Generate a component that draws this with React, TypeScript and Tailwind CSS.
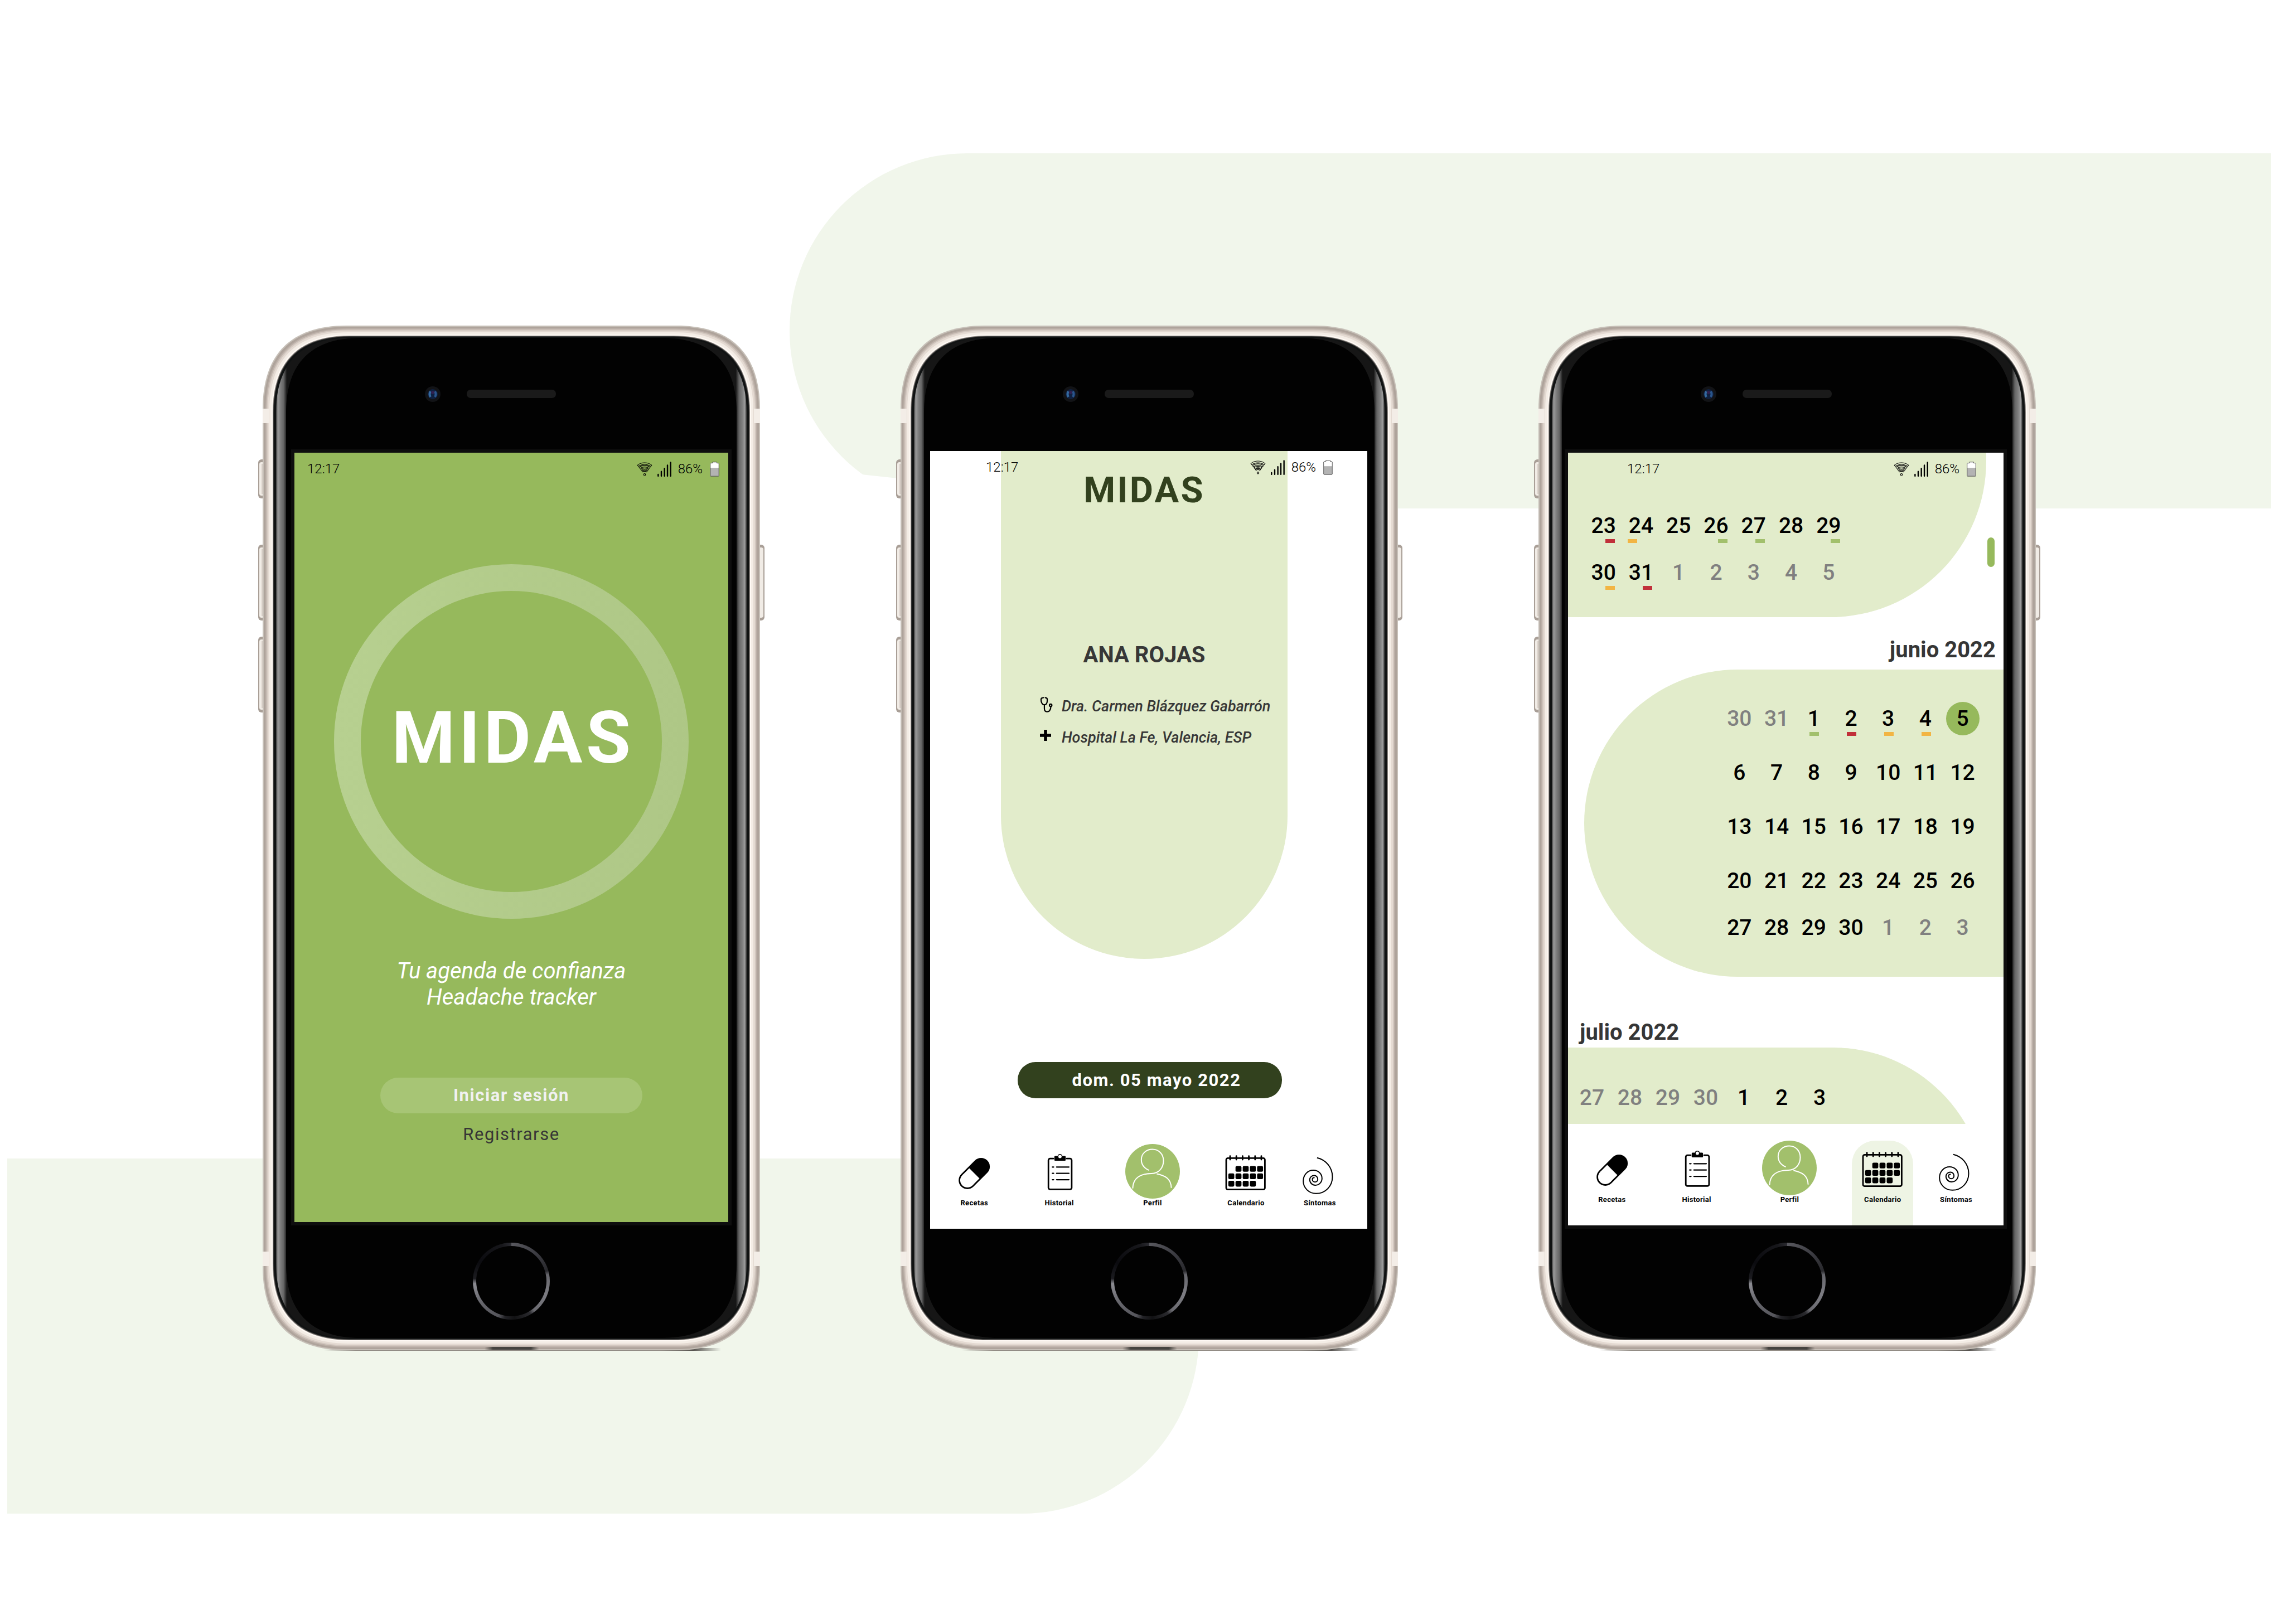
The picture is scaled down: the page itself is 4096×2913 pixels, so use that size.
import type { ReactNode } from 'react';

/* ---------- Phone hardware ---------- */

const BODY_W = 892;
const BODY_H = 1838;

// Rounded outline with continuous corners, inset from the body edge.
function outline(ix: number, iy: number, corner: number): string {
  const l = ix;
  const t = iy;
  const r = BODY_W - ix;
  const b = BODY_H - iy;
  const e = corner;
  const h = corner * 0.34;
  return [
    `M${l} ${t + e}`,
    `C${l} ${t + h} ${l + h} ${t} ${l + e} ${t}`,
    `H${r - e}`,
    `C${r - h} ${t} ${r} ${t + h} ${r} ${t + e}`,
    `V${b - e}`,
    `C${r} ${b - h} ${r - h} ${b} ${r - e} ${b}`,
    `H${l + e}`,
    `C${l + h} ${b} ${l} ${b - h} ${l} ${b - e}`,
    'Z',
  ].join('');
}

const frameLayers: [number, string][] = [
  [0, '#c6bfb7'],
  [2, '#aea39b'],
  [5, '#bcb0a8'],
  [7, '#d2c7bf'],
  [9, '#e4dad2'],
  [12, '#f4ede6'],
  [16, '#fffaf5'],
  [18, '#8f8883'],
  [19, '#3a3a3a'],
  [20, '#101212'],
];

function SideButton({ x, y, h }: { x: number; y: number; h: number }) {
  return (
    <g>
      <rect x={x} y={y} width="22" height={h} rx="6" fill="#a99f97" />
      <rect x={x + 2} y={y + 5} width="18" height={h - 10} rx="4" fill="#f1ece6" />
      <rect x={x + 6} y={y + 8} width="3" height={h - 16} fill="#d8cfc8" />
    </g>
  );
}

function Shell({ id }: { id: string }) {
  return (
    <svg
      aria-hidden="true"
      viewBox={`0 0 ${BODY_W} ${BODY_H}`}
      className="absolute inset-0 size-full overflow-visible"
    >
      <defs>
        <linearGradient id={`${id}-glass`} gradientUnits="userSpaceOnUse" x1="24" y1="0" x2="868" y2="0">
          <stop offset="0" stopColor="#3a3a3a" />
          <stop offset="0.004" stopColor="#9a9a9a" />
          <stop offset="0.009" stopColor="#808080" />
          <stop offset="0.016" stopColor="#666" />
          <stop offset="0.023" stopColor="#161616" />
          <stop offset="0.977" stopColor="#161616" />
          <stop offset="0.984" stopColor="#666" />
          <stop offset="0.991" stopColor="#808080" />
          <stop offset="0.996" stopColor="#9a9a9a" />
          <stop offset="1" stopColor="#3a3a3a" />
        </linearGradient>
        <linearGradient id={`${id}-base`} x1="0" x2="1">
          <stop offset="0" stopColor="#8d8780" stopOpacity="0" />
          <stop offset="0.08" stopColor="#8d8780" />
          <stop offset="0.85" stopColor="#8d8780" />
          <stop offset="0.93" stopColor="#55524e" />
          <stop offset="1" stopColor="#55524e" stopOpacity="0" />
        </linearGradient>
        <linearGradient id={`${id}-slot`} x1="0" x2="1">
          <stop offset="0" stopColor="#55524e" stopOpacity="0" />
          <stop offset="0.15" stopColor="#45433f" />
          <stop offset="0.85" stopColor="#45433f" />
          <stop offset="1" stopColor="#55524e" stopOpacity="0" />
        </linearGradient>
      </defs>

      <SideButton x={-8} y={240} h={70} />
      <SideButton x={-8} y={393} h={136} />
      <SideButton x={-8} y={558} h={136} />
      <SideButton x={878} y={393} h={136} />
      <rect x="110" y="1834" width="712" height="5" fill={`url(#${id}-base)`} />

      {frameLayers.map(([inset, color]) => (
        <path key={inset} d={outline(inset, inset, 150 - inset * 0.7)} fill={color} />
      ))}
      {[149, 1661].map((y) => (
        <g key={y} fill="#f3ede7">
          <rect x="0" y={y} width="11" height="26" />
          <rect x="881" y={y} width="11" height="26" />
        </g>
      ))}
      <path d={outline(24, 22, 134)} fill={`url(#${id}-glass)`} />
      <path d={outline(42, 22, 134)} fill="#020202" />
      <rect x="398" y="1832" width="98" height="5" fill={`url(#${id}-slot)`} />

      <circle cx="305" cy="123" r="14" fill="#121316" />
      <circle cx="305" cy="123" r="9" fill="#10203f" />
      <path d="M301 118q-3 5 0 10" fill="none" stroke="#34699f" strokeWidth="4" />
      <path d="M309 118q3 5 0 10" fill="none" stroke="#2a558c" strokeWidth="4" />
      <circle cx="305" cy="120" r="3" fill="#31204f" />
      <rect x="366" y="115" width="160" height="15" rx="7" fill="#1a1a1a" />
    </svg>
  );
}

function Phone({ id, label, children }: { id: string; label: string; children: ReactNode }) {
  return (
    <article aria-label={label} className="relative flex h-[1838px] w-[892px] shrink-0 flex-col items-center">
      <Shell id={id} />
      {children}
      <button
        type="button"
        aria-label="Inicio"
        className="relative mt-auto mb-[55px] size-[138px] rounded-full bg-[conic-gradient(#58585e,#3a3a40_45deg,#28282c_74deg,#66666c_80deg,#7c7c82_110deg,#6a6a70_142deg,#2a2a2e_150deg,#121214_175deg,#222226_190deg,#55555b_200deg,#66666c_235deg,#8c8c92_266deg,#1c1c20_274deg,#0b0b0f_300deg,#17171b_345deg,#2a2a30)] p-[6px]"
      >
        <span className="block size-full rounded-full bg-[#020202]" />
      </button>
    </article>
  );
}

/* ---------- Status bar ---------- */

function wifiBand(outer: number, inner: number): string {
  const s = 0.6;
  const c = 0.8;
  return `M${50 - outer * s} ${82 - outer * c}A${outer} ${outer} 0 0 1 ${50 + outer * s} ${82 - outer * c}L${50 + inner * s} ${82 - inner * c}A${inner} ${inner} 0 0 0 ${50 - inner * s} ${82 - inner * c}Z`;
}

const wifiBands: [number, number][] = [
  [80, 69],
  [62, 52],
  [45, 36],
  [30, 22],
];

function StatusBar({ inset }: { inset: string }) {
  return (
    <header className={`absolute inset-x-0 top-[15px] z-10 flex h-[28px] items-center text-[24px] leading-[28px] font-light text-black ${inset}`}>
      <time>12:17</time>
      <svg aria-label="Wi-Fi" viewBox="-2 -2 104 94" className="ml-auto h-[25px] w-[28px]">
        <g fill="none" stroke="#000" strokeWidth="4" strokeLinejoin="round">
          {wifiBands.map(([o, i]) => (
            <path key={o} d={wifiBand(o, i)} />
          ))}
          <circle cx="50" cy="82" r="6.5" />
        </g>
      </svg>
      <svg aria-label="Cobertura" viewBox="0 0 93 100" className="ml-[9px] h-[27px] w-[25px]">
        <path
          d="M5 85V96M26 66V96M47 45V96M67 24V96M88 5V96"
          stroke="#000"
          strokeWidth="9"
          strokeLinecap="round"
        />
      </svg>
      <span className="ml-[12px]">86%</span>
      <svg aria-label="Batería" viewBox="0 0 62 101" className="ml-[13px] h-[27px] w-[17px]">
        <path d="M3 9H17V3H46V9H59V98H3Z" fill="#fff" />
        <path d="M3 42H59V98H3Z" fill="#b3b3b3" />
        <path d="M6 10H17V3H46V10H56L60 14V95L57 98H5L2 95V14Z" fill="none" stroke="#333" strokeWidth="3" />
      </svg>
    </header>
  );
}

/* ---------- Navigation ---------- */

function PillIcon() {
  return (
    <>
      <path d="M36.9 65.2L61.4 40.7" stroke="#000" strokeWidth="31.4" strokeLinecap="round" />
      <circle cx="36.9" cy="65.2" r="12.9" fill="#fff" />
      <path d="M36.9 65.2L49.4 52.7" stroke="#fff" strokeWidth="25.8" />
    </>
  );
}

function ClipboardIcon() {
  return (
    <>
      <path
        d="M38 26.2H32.2a3 3 0 0 0-3 3V78.4a3 3 0 0 0 3 3H67.9a3 3 0 0 0 3-3V29.2a3 3 0 0 0-3-3H62"
        fill="none"
        stroke="#000"
        strokeWidth="2.8"
        strokeLinecap="round"
      />
      <rect x="39.8" y="21.6" width="20.3" height="8.4" rx="1.5" />
      <circle cx="49.9" cy="22.2" r="4.3" />
      <circle cx="49.9" cy="22.4" r="3" fill="#fff" />
      <path
        d="M36.2 41.3H38.6M43.8 41.3H66M36.2 52.7H38.6M43.8 52.7H66M36.2 64.1H38.6M43.8 64.1H66"
        stroke="#000"
        strokeWidth="2.2"
        strokeLinecap="round"
      />
    </>
  );
}

function ProfileIcon() {
  return (
    <>
      <circle cx="49" cy="49" r="49" fill="#a2c06c" />
      <path
        d="M42.6 47.2C33 43 28.8 36 28.8 28C28.8 17 38 9.5 48.6 9.5C60 9.5 68.5 18 68.5 30C68.5 42 61 52.5 47 53C27 53.3 14 60 13.4 79.8M56.3 53.6C72 57 82 62 82.6 78.7"
        fill="none"
        stroke="#fff"
        strokeWidth="2"
      />
    </>
  );
}

const calendarDots = [
  { y: 39.4, from: 1, to: 4 },
  { y: 52.7, from: 0, to: 4 },
  { y: 66, from: 0, to: 3 },
];

function CalendarIcon() {
  return (
    <>
      <rect x="14" y="25.3" width="69.4" height="56.4" rx="3" fill="none" stroke="#000" strokeWidth="2.8" />
      {[21, 32.2, 43.4, 54.6, 65.8, 77].map((x) => (
        <path key={x} d={`M${x} 21.6V28`} stroke="#000" strokeWidth="2.8" strokeLinecap="round" />
      ))}
      {calendarDots.map(({ y, from, to }) =>
        [0, 1, 2, 3, 4]
          .filter((c) => c >= from && c <= to)
          .map((c) => <rect key={`${y}-${c}`} x={17.8 + c * 12.9} y={y} width="10.7" height="10.4" rx="2.4" />),
      )}
    </>
  );
}

function SpiralIcon() {
  return (
    <path
      d="M43.9 24.8C60 28.5 71.5 42 71.5 59C71.5 75.5 59 88.8 42.2 88.8C29.5 88.8 19.2 79 19.2 66.6C19.2 55.5 27 47 37.4 47C46 47 52.8 53.5 52.8 61.7C52.8 68.5 47.5 73.9 40.9 73.9C35.2 73.9 30.8 69.5 30.8 63.9C30.8 59.7 34.5 56.5 38.8 56.5C42.5 56.5 45.2 59.5 45.2 63.3C45.2 66.1 43 68.2 40.3 68.2C37.6 68.2 35.5 66 35.5 63.3C35.5 61.6 37 60.3 39.5 60.3"
      fill="none"
      stroke="#000"
      strokeWidth="2"
    />
  );
}

const navItems: { label: string; icon: ReactNode }[] = [
  { label: 'Recetas', icon: <PillIcon /> },
  { label: 'Historial', icon: <ClipboardIcon /> },
  { label: 'Perfil', icon: <ProfileIcon /> },
  { label: 'Calendario', icon: <CalendarIcon /> },
  { label: 'Síntomas', icon: <SpiralIcon /> },
];

function NavBar({ active }: { active?: string }) {
  return (
    <nav className="mt-auto grid h-[182px] shrink-0 grid-cols-[158fr_146fr_188fr_146fr_118fr] items-end rounded-t-[6px] bg-white pr-[26px]">
      {navItems.map(({ label, icon }) => (
        <button
          key={label}
          type="button"
          aria-current={label === active ? 'page' : undefined}
          className={`mx-auto flex h-[152px] w-[110px] flex-col items-center rounded-t-[42px] text-[13px] leading-[16px] font-bold tracking-wide text-black ${
            label === active ? 'bg-[#eef4e4]' : ''
          }`}
        >
          <svg aria-hidden="true" viewBox="0 0 98 98" className="size-[98px] shrink-0">
            {icon}
          </svg>
          {label}
        </button>
      ))}
    </nav>
  );
}

/* ---------- Screens ---------- */

function WelcomeScreen() {
  return (
    <main className="relative mt-[228px] flex h-[1380px] w-[778px] flex-col items-center bg-[#96b95c] pt-[200px] outline-6 outline-[#0e0e0e]">
      <StatusBar inset="pl-[23px] pr-[16px]" />
      <div className="flex size-[636px] shrink-0 items-center justify-center rounded-full bg-linear-to-r from-[#b7d090] to-[#aec786] p-[48px]">
        <div className="flex size-full items-center justify-center rounded-full bg-[#96b95c] pb-[12px] pl-[6px]">
          <h1 className="text-[130px] leading-[130px] font-bold tracking-wider text-white">MIDAS</h1>
        </div>
      </div>
      <p className="mt-[70px] text-center text-[40px] leading-[47px] text-white italic">
        Tu agenda de confianza
        <br />
        Headache tracker
      </p>
      <button
        type="button"
        className="mt-[121px] h-[64px] w-[470px] rounded-[32px] bg-[#a7c575] text-[31px] leading-[40px] font-bold tracking-wider text-[#f1f1f1]"
      >
        Iniciar sesión
      </button>
      <a href="#registro" className="mt-[18px] text-[31px] leading-[40px] tracking-wider text-[#363636]">
        Registrarse
      </a>
    </main>
  );
}

function StethoscopeIcon() {
  return (
    <svg aria-hidden="true" viewBox="0 0 80 102" className="mb-[7px] h-[28px] w-[23px]">
      <g fill="none" stroke="#000" strokeWidth="8" strokeLinecap="round">
        <path d="M21 5Q5 6 5 18C5 36 14 52 27 52C40 52 46 36 46 18Q46 6 33 5" />
        <path d="M27 53V76C27 90 34 97 44 97C60 97 68 88 69 64" />
        <circle cx="68" cy="55" r="8" />
      </g>
    </svg>
  );
}

function CrossIcon() {
  return (
    <svg aria-hidden="true" viewBox="0 0 20 20" className="mb-[9px] size-[20px]">
      <path d="M7.2 0h5.6v7.2H20v5.6h-7.2V20H7.2v-7.2H0V7.2h7.2z" />
    </svg>
  );
}

function ProfileScreen() {
  return (
    <main className="relative mt-[225px] ml-[53px] flex h-[1395px] w-[784px] flex-col self-start bg-white">
      <StatusBar inset="pl-[100px] pr-[62px]" />
      <section className="mr-[143px] ml-[127px] flex h-[911px] flex-col rounded-b-full bg-[#e2eccb] pt-[38px]">
        <h2 className="text-center text-[65px] leading-[64px] font-bold tracking-wider text-[#32411e]">MIDAS</h2>
        <h3 className="mt-[240px] text-center text-[40px] leading-[48px] font-bold text-[#373737]">ANA ROJAS</h3>
        <ul className="mt-[40px] pl-[70px] text-[27px] leading-[56px] font-medium whitespace-nowrap text-[#373737] italic">
          <li className="flex items-center">
            <span className="w-[39px] shrink-0">
              <StethoscopeIcon />
            </span>
            Dra. Carmen Blázquez Gabarrón
          </li>
          <li className="flex items-center">
            <span className="w-[39px] shrink-0">
              <CrossIcon />
            </span>
            Hospital La Fe, Valencia, ESP
          </li>
        </ul>
      </section>
      <button
        type="button"
        className="mt-[185px] ml-[157px] h-[65px] w-[474px] rounded-[32px] bg-[#32411e] pl-[24px] text-[31px] leading-[40px] font-bold tracking-wider text-white"
      >
        dom. 05 mayo 2022
      </button>
      <NavBar />
    </main>
  );
}

type Mark = 'red' | 'orange' | 'green';
type Day = { n: number; out?: boolean; mark?: Mark; side?: 'start' | 'center' | 'end'; today?: boolean };

const markColor: Record<Mark, string> = {
  red: 'bg-[#c1303a]',
  orange: 'bg-[#f2b544]',
  green: 'bg-[#a2c06c]',
};

const markSide = {
  start: 'left-[10px]',
  center: 'left-[26px]',
  end: 'left-[37px]',
};

const range = (from: number, to: number, out = false): Day[] =>
  Array.from({ length: to - from + 1 }, (_, i) => ({ n: from + i, out }));

const mayo: Day[][] = [
  [
    { n: 23, mark: 'red', side: 'end' },
    { n: 24, mark: 'orange', side: 'start' },
    { n: 25 },
    { n: 26, mark: 'green', side: 'end' },
    { n: 27, mark: 'green', side: 'end' },
    { n: 28 },
    { n: 29, mark: 'green', side: 'end' },
  ],
  [{ n: 30, mark: 'orange', side: 'end' }, { n: 31, mark: 'red', side: 'end' }, ...range(1, 5, true)],
];

const junio: Day[][] = [
  [
    ...range(30, 31, true),
    { n: 1, mark: 'green', side: 'center' },
    { n: 2, mark: 'red', side: 'center' },
    { n: 3, mark: 'orange', side: 'center' },
    { n: 4, mark: 'orange', side: 'center' },
    { n: 5, today: true },
  ],
  range(6, 12),
  range(13, 19),
  range(20, 26),
  [...range(27, 30), ...range(1, 3, true)],
];

const julio: Day[][] = [[...range(27, 30, true), ...range(1, 3)]];

function Month({ label, weeks, rows, className }: { label: string; weeks: Day[][]; rows: string; className: string }) {
  return (
    <table aria-label={label} className={`table-fixed text-center text-[39px] leading-[44px] font-medium ${className}`}>
      <tbody>
        {weeks.map((week, w) => (
          <tr key={w} className={rows}>
            {week.map((day, d) => (
              <td key={d} className={`relative p-0 ${day.out ? 'text-[#808080]' : 'text-black'}`}>
                {day.today ? (
                  <span className="mx-auto flex size-[60px] items-center justify-center rounded-full bg-[#96b95c]">
                    {day.n}
                  </span>
                ) : (
                  day.n
                )}
                {day.mark && (
                  <span
                    className={`absolute top-1/2 mt-[24px] h-[7px] w-[17px] ${markColor[day.mark]} ${markSide[day.side ?? 'center']}`}
                  />
                )}
              </td>
            ))}
          </tr>
        ))}
      </tbody>
    </table>
  );
}

function CalendarScreen() {
  return (
    <main className="relative mt-[228px] ml-[53px] flex h-[1386px] w-[781px] flex-col self-start bg-white outline-6 outline-[#0e0e0e]">
      <StatusBar inset="pl-[106px] pr-[49px]" />
      <div className="min-h-0 flex-1 overflow-hidden">
        <section className="mr-[31px] h-[295px] rounded-br-[280px] bg-[#e2eccb] pt-[89px] pl-[30px]">
          <Month label="mayo 2022" weeks={mayo} rows="h-[84px]" className="w-[471px]" />
        </section>
        <h2 className="mt-[35px] pr-[14px] text-right text-[40px] leading-[48px] font-bold text-[#363636]">junio 2022</h2>
        <section className="mt-[11px] ml-[29px] h-[551px] rounded-l-full bg-[#e2eccb] pt-[39px] pr-[40px]">
          <Month
            label="junio 2022"
            weeks={junio}
            rows="h-[97px] last:h-[71px]"
            className="ml-auto w-[467px]"
          />
        </section>
        <h2 className="mt-[76px] pl-[21px] text-[40px] leading-[48px] font-bold text-[#363636]">julio 2022</h2>
        <section className="mt-[3px] mr-[31px] h-[550px] rounded-r-full bg-[#e2eccb] pt-[48px] pl-[9px]">
          <Month label="julio 2022" weeks={julio} rows="h-[84px]" className="w-[476px]" />
        </section>
      </div>
      <span aria-hidden="true" className="absolute top-[152px] right-[16px] h-[53px] w-[13px] rounded-full bg-[#96b95c]" />
      <NavBar active="Calendario" />
    </main>
  );
}

export default function App() {
  return (
    <div className="relative isolate flex min-h-screen items-center justify-center gap-[252px] overflow-hidden bg-white pt-[93px] pl-[26px] font-['Roboto',sans-serif]">
      <div
        aria-hidden="true"
        className="absolute top-[275px] right-[23px] left-[1416px] -z-10 h-[637px] rounded-l-full bg-[#f1f6eb] [clip-path:polygon(0_0,100%_0,100%_100%,240px_100%,240px_588px,129px_576px,0_576px)]"
      />
      <div
        aria-hidden="true"
        className="absolute top-[2078px] left-[13px] -z-10 h-[637px] w-[2137px] rounded-r-full bg-[#f1f6eb]"
      />
      <Phone id="welcome" label="Bienvenida">
        <WelcomeScreen />
      </Phone>
      <Phone id="profile" label="Perfil">
        <ProfileScreen />
      </Phone>
      <Phone id="calendar" label="Calendario">
        <CalendarScreen />
      </Phone>
    </div>
  );
}
